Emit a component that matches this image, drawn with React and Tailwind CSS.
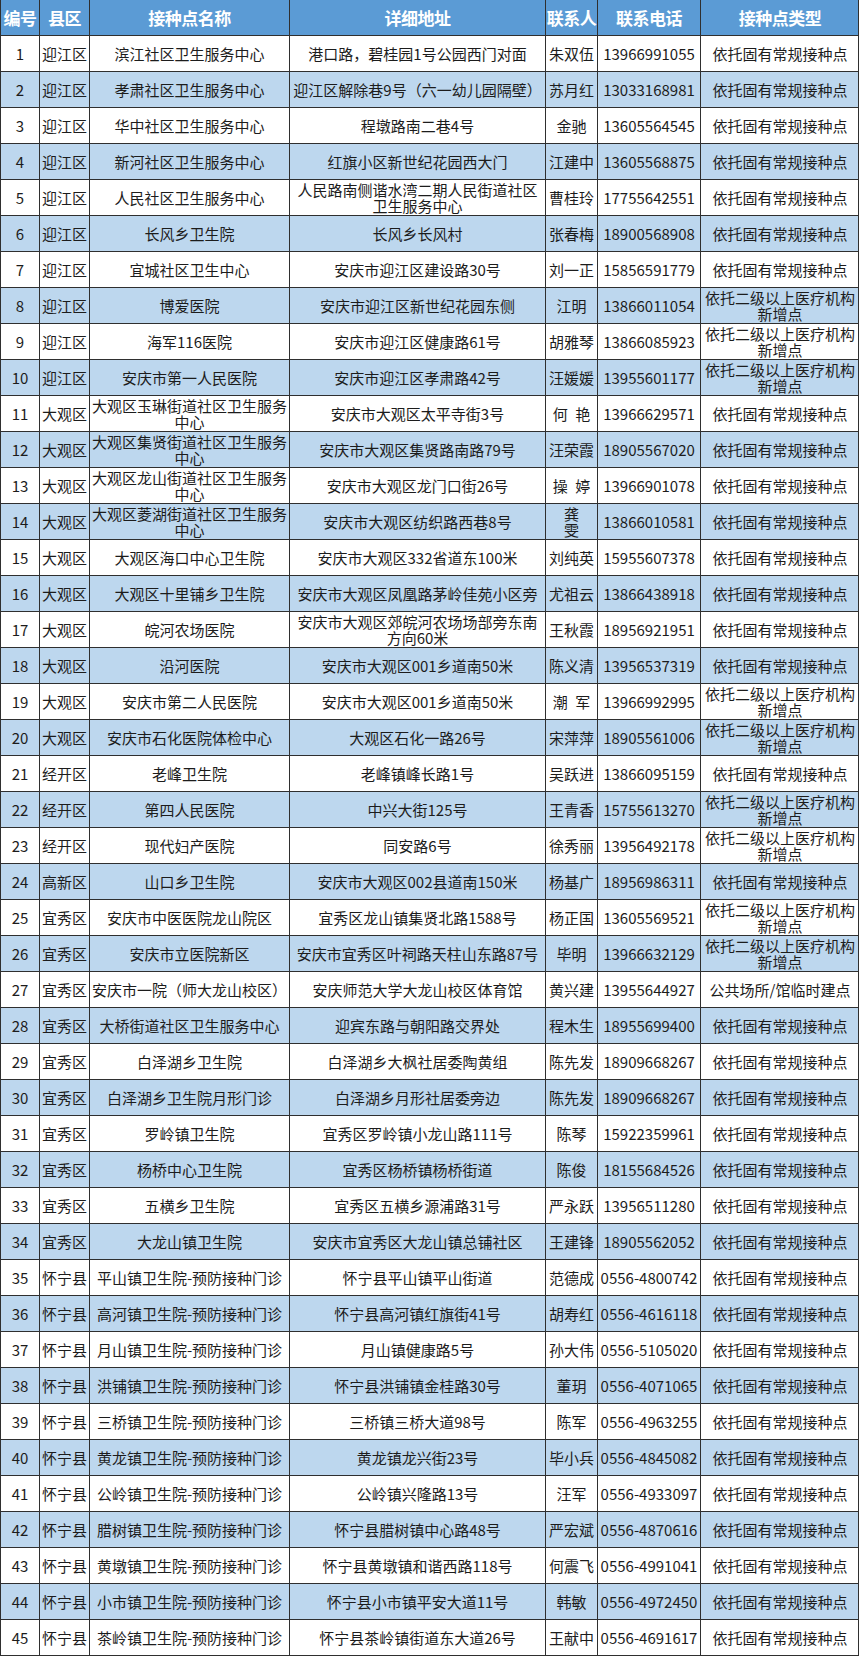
import React from "react";

const A = "依托固有常规接种点";
const B = "依托二级以上医疗机构新增点";

const rows = [
  ["1", "迎江区", "滨江社区卫生服务中心", "港口路，碧桂园1号公园西门对面", "朱双伍", "13966991055", A],
  ["2", "迎江区", "孝肃社区卫生服务中心", "迎江区解除巷9号（六一幼儿园隔壁）", "苏月红", "13033168981", A],
  ["3", "迎江区", "华中社区卫生服务中心", "程墩路南二巷4号", "金驰", "13605564545", A],
  ["4", "迎江区", "新河社区卫生服务中心", "红旗小区新世纪花园西大门", "江建中", "13605568875", A],
  ["5", "迎江区", "人民社区卫生服务中心", "人民路南侧谐水湾二期人民街道社区卫生服务中心", "曹桂玲", "17755642551", A],
  ["6", "迎江区", "长风乡卫生院", "长风乡长风村", "张春梅", "18900568908", A],
  ["7", "迎江区", "宜城社区卫生中心", "安庆市迎江区建设路30号", "刘一正", "15856591779", A],
  ["8", "迎江区", "博爱医院", "安庆市迎江区新世纪花园东侧", "江明", "13866011054", B],
  ["9", "迎江区", "海军116医院", "安庆市迎江区健康路61号", "胡雅琴", "13866085923", B],
  ["10", "迎江区", "安庆市第一人民医院", "安庆市迎江区孝肃路42号", "汪媛媛", "13955601177", B],
  ["11", "大观区", "大观区玉琳街道社区卫生服务中心", "安庆市大观区太平寺街3号", "何\u2002艳", "13966629571", A],
  ["12", "大观区", "大观区集贤街道社区卫生服务中心", "安庆市大观区集贤路南路79号", "汪荣霞", "18905567020", A],
  ["13", "大观区", "大观区龙山街道社区卫生服务中心", "安庆市大观区龙门口街26号", "操\u2002婷", "13966901078", A],
  ["14", "大观区", "大观区菱湖街道社区卫生服务中心", "安庆市大观区纺织路西巷8号", "龚\n雯", "13866010581", A],
  ["15", "大观区", "大观区海口中心卫生院", "安庆市大观区332省道东100米", "刘纯英", "15955607378", A],
  ["16", "大观区", "大观区十里铺乡卫生院", "安庆市大观区凤凰路茅岭佳苑小区旁", "尤祖云", "13866438918", A],
  ["17", "大观区", "皖河农场医院", "安庆市大观区郊皖河农场场部旁东南方向60米", "王秋霞", "18956921951", A],
  ["18", "大观区", "沿河医院", "安庆市大观区001乡道南50米", "陈义清", "13956537319", A],
  ["19", "大观区", "安庆市第二人民医院", "安庆市大观区001乡道南50米", "潮\u2002军", "13966992995", B],
  ["20", "大观区", "安庆市石化医院体检中心", "大观区石化一路26号", "宋萍萍", "18905561006", B],
  ["21", "经开区", "老峰卫生院", "老峰镇峰长路1号", "吴跃进", "13866095159", A],
  ["22", "经开区", "第四人民医院", "中兴大街125号", "王青香", "15755613270", B],
  ["23", "经开区", "现代妇产医院", "同安路6号", "徐秀丽", "13956492178", B],
  ["24", "高新区", "山口乡卫生院", "安庆市大观区002县道南150米", "杨基广", "18956986311", A],
  ["25", "宜秀区", "安庆市中医医院龙山院区", "宜秀区龙山镇集贤北路1588号", "杨正国", "13605569521", B],
  ["26", "宜秀区", "安庆市立医院新区", "安庆市宜秀区叶祠路天柱山东路87号", "毕明", "13966632129", B],
  ["27", "宜秀区", "安庆市一院（师大龙山校区）", "安庆师范大学大龙山校区体育馆", "黄兴建", "13955644927", "公共场所/馆临时建点"],
  ["28", "宜秀区", "大桥街道社区卫生服务中心", "迎宾东路与朝阳路交界处", "程木生", "18955699400", A],
  ["29", "宜秀区", "白泽湖乡卫生院", "白泽湖乡大枫社居委陶黄组", "陈先发", "18909668267", A],
  ["30", "宜秀区", "白泽湖乡卫生院月形门诊", "白泽湖乡月形社居委旁边", "陈先发", "18909668267", A],
  ["31", "宜秀区", "罗岭镇卫生院", "宜秀区罗岭镇小龙山路111号", "陈琴", "15922359961", A],
  ["32", "宜秀区", "杨桥中心卫生院", "宜秀区杨桥镇杨桥街道", "陈俊", "18155684526", A],
  ["33", "宜秀区", "五横乡卫生院", "宜秀区五横乡源浦路31号", "严永跃", "13956511280", A],
  ["34", "宜秀区", "大龙山镇卫生院", "安庆市宜秀区大龙山镇总铺社区", "王建锋", "18905562052", A],
  ["35", "怀宁县", "平山镇卫生院-预防接种门诊", "怀宁县平山镇平山街道", "范德成", "0556-4800742", A],
  ["36", "怀宁县", "高河镇卫生院-预防接种门诊", "怀宁县高河镇红旗街41号", "胡寿红", "0556-4616118", A],
  ["37", "怀宁县", "月山镇卫生院-预防接种门诊", "月山镇健康路5号", "孙大伟", "0556-5105020", A],
  ["38", "怀宁县", "洪铺镇卫生院-预防接种门诊", "怀宁县洪铺镇金桂路30号", "董玥", "0556-4071065", A],
  ["39", "怀宁县", "三桥镇卫生院-预防接种门诊", "三桥镇三桥大道98号", "陈军", "0556-4963255", A],
  ["40", "怀宁县", "黄龙镇卫生院-预防接种门诊", "黄龙镇龙兴街23号", "毕小兵", "0556-4845082", A],
  ["41", "怀宁县", "公岭镇卫生院-预防接种门诊", "公岭镇兴隆路13号", "汪军", "0556-4933097", A],
  ["42", "怀宁县", "腊树镇卫生院-预防接种门诊", "怀宁县腊树镇中心路48号", "严宏斌", "0556-4870616", A],
  ["43", "怀宁县", "黄墩镇卫生院-预防接种门诊", "怀宁县黄墩镇和谐西路118号", "何震飞", "0556-4991041", A],
  ["44", "怀宁县", "小市镇卫生院-预防接种门诊", "怀宁县小市镇平安大道11号", "韩敏", "0556-4972450", A],
  ["45", "怀宁县", "茶岭镇卫生院-预防接种门诊", "怀宁县茶岭镇街道东大道26号", "王献中", "0556-4691617", A],
];

const headers = ["编号", "县区", "接种点名称", "详细地址", "联系人", "联系电话", "接种点类型"];

const gridCols = "grid grid-cols-[39px_50px_200px_256px_52px_103px_158px]";

function Cell({ children, last, nowrap }) {
  return (
    <div
      className={
        "flex items-center justify-center text-center overflow-hidden px-[1px] leading-[16px] border-[#2f2f2f] " +
        (last ? "" : "border-r ") +
        (nowrap ? "whitespace-nowrap" : "whitespace-pre-line")
      }
    >
      {children}
    </div>
  );
}

export default function App() {
  return (
    <div className="w-[862px] bg-white font-['Noto_Sans_CJK_SC',sans-serif] text-[15px] text-[#1c1c1c]">
      <div className="w-[859px] border-l border-r border-[#2f2f2f]">
        <div className={gridCols + " h-[36px] bg-[#5b9bd5] border-b border-[#2f2f2f]"}>
          {headers.map((h, i) => (
            <div
              key={h}
              className={
                "flex items-center justify-center whitespace-nowrap text-white font-bold text-[17px] tracking-[-0.5px] border-[#2f2f2f] " +
                (i < 6 ? "border-r" : "")
              }
            >
              {h}
            </div>
          ))}
        </div>
        {rows.map((r, idx) => (
          <div
            key={r[0]}
            className={
              gridCols +
              " h-[36px] border-b border-[#2f2f2f] " +
              (idx % 2 === 1 ? "bg-[#bdd7ee]" : "bg-white")
            }
          >
            <Cell nowrap>{r[0]}</Cell>
            <Cell nowrap>{r[1]}</Cell>
            <Cell>{r[2]}</Cell>
            <Cell>{r[3]}</Cell>
            <Cell>{r[4]}</Cell>
            <Cell nowrap>{r[5]}</Cell>
            <Cell last>{r[6]}</Cell>
          </div>
        ))}
      </div>
    </div>
  );
}
